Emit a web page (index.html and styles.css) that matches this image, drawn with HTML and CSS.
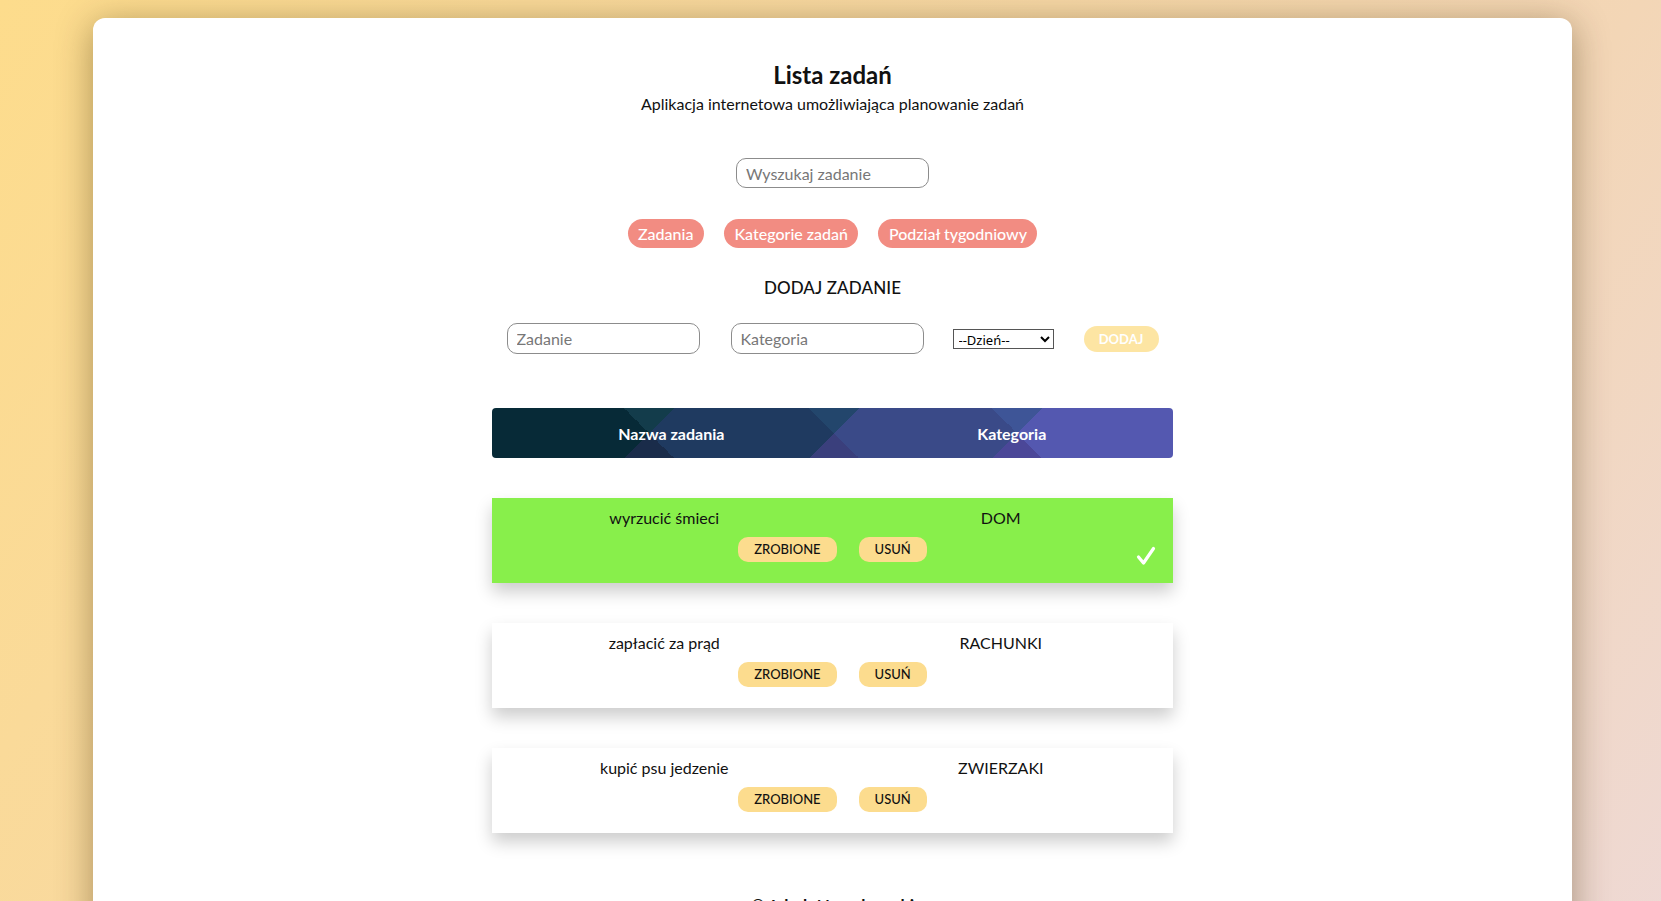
FILE: index.html
```html
<!DOCTYPE html>
<html lang="pl">
<head>
<meta charset="utf-8">
<title>Lista zadań</title>
<link rel="stylesheet" href="styles.css">
</head>
<body>
<main class="card">
  <header class="intro">
    <h1 class="title">Lista zadań</h1>
    <p class="subtitle">Aplikacja internetowa umożliwiająca planowanie zadań</p>
  </header>

  <div class="search-wrap">
    <input class="field search" type="text" placeholder="Wyszukaj zadanie">
  </div>

  <nav class="nav">
    <button class="pill">Zadania</button>
    <button class="pill">Kategorie zadań</button>
    <button class="pill">Podział tygodniowy</button>
  </nav>

  <h2 class="section-title">DODAJ ZADANIE</h2>

  <form class="add-form">
    <input class="field" type="text" placeholder="Zadanie">
    <input class="field" type="text" placeholder="Kategoria">
    <select class="day">
      <option>--Dzień--</option>
    </select>
    <button class="add-btn" type="button">DODAJ</button>
  </form>

  <section class="list">
    <div class="list-head">
      <div class="head-cell">Nazwa zadania</div>
      <div class="head-cell">Kategoria</div>
    </div>

    <div class="task done">
      <div class="task-cols">
        <div class="task-cell">wyrzucić śmieci</div>
        <div class="task-cell">DOM</div>
      </div>
      <div class="task-actions">
        <button class="small-btn">ZROBIONE</button>
        <button class="small-btn">USUŃ</button>
      </div>
      <svg class="check" width="20" height="20" viewBox="0 0 20 20" aria-hidden="true">
        <polyline points="2.5,11 7.5,17 17.5,2.5" fill="none" stroke="#fff" stroke-width="3.2" stroke-linecap="round" stroke-linejoin="round"/>
      </svg>
    </div>

    <div class="task">
      <div class="task-cols">
        <div class="task-cell">zapłacić za prąd</div>
        <div class="task-cell">RACHUNKI</div>
      </div>
      <div class="task-actions">
        <button class="small-btn">ZROBIONE</button>
        <button class="small-btn">USUŃ</button>
      </div>
    </div>

    <div class="task">
      <div class="task-cols">
        <div class="task-cell">kupić psu jedzenie</div>
        <div class="task-cell">ZWIERZAKI</div>
      </div>
      <div class="task-actions">
        <button class="small-btn">ZROBIONE</button>
        <button class="small-btn">USUŃ</button>
      </div>
    </div>
  </section>

  <footer class="footer">© Jakub Nowakowski</footer>
</main>
</body>
</html>
```

FILE: styles.css
```css
html {
  min-height: 100%;
  background: linear-gradient(125deg, #fddc8c 0%, #f7d8a6 45%, #f3d6b6 70%, #eed9d6 100%);
}

body {
  margin: 0;
  padding: 18px 89px 0 93px;
  font-family: Lato, "Noto Sans", sans-serif;
  color: #111;
}

.card {
  background: #fff;
  border-radius: 12px;
  box-shadow: 0 6px 36px rgba(60, 40, 0, 0.42);
  padding: 42px 0 20px;
  min-height: 900px;
  display: flex;
  flex-direction: column;
  align-items: center;
}

.intro {
  text-align: center;
}

.title {
  margin: 0;
  font-size: 24px;
  line-height: 30px;
  font-weight: 700;
  color: #111;
}

.subtitle {
  margin: 5px 0 0;
  font-size: 16px;
  line-height: 18px;
  color: #111;
}

.search-wrap {
  margin-top: 45px;
}

.field {
  box-sizing: border-box;
  width: 193px;
  height: 31px;
  border: 1px solid #8c8c8c;
  border-radius: 10px;
  padding: 0 9px;
  font-family: Lato, "Noto Sans", sans-serif;
  font-size: 16px;
  color: #222;
  background: #fff;
  outline: none;
}

.field::placeholder {
  color: #777;
}

.search {
  height: 30px;
}

.nav {
  margin-top: 31px;
  display: flex;
  gap: 20px;
}

.pill {
  height: 29px;
  padding: 0 10.5px;
  border: none;
  border-radius: 15px;
  background: #f28c82;
  color: #fff;
  font-family: Lato, "Noto Sans", sans-serif;
  font-size: 16px;
  font-weight: 500;
  line-height: 29px;
}

.section-title {
  margin: 29px 0 0;
  font-size: 17px;
  line-height: 22px;
  font-weight: 500;
  color: #111;
  letter-spacing: 0.1px;
}

.add-form {
  margin-top: 24px;
  display: flex;
  align-items: center;
  gap: 30px;
}

.add-form .field + .field {
  margin-left: 1px;
}

.day {
  box-sizing: border-box;
  width: 101px;
  height: 20px;
  border: 1px solid #555;
  border-radius: 0;
  background: #fff;
  font-family: "Noto Sans", "Open Sans", sans-serif;
  font-size: 13px;
  color: #000;
  padding: 0 0 0 1px;
  margin-left: -1px;
}

.add-btn {
  width: 75px;
  height: 26px;
  border: none;
  border-radius: 13px;
  background: #fde5a3;
  color: #fff;
  font-family: Lato, "Noto Sans", sans-serif;
  font-size: 13px;
  font-weight: 700;
}

.list {
  margin-top: 54px;
  width: 681px;
  display: flex;
  flex-direction: column;
  gap: 40px;
}

.list-head {
  height: 50px;
  border-radius: 4px;
  display: grid;
  grid-template-columns: 1fr 1fr;
  align-items: center;
  color: #fff;
  font-size: 16px;
  font-weight: 700;
  background:
    conic-gradient(from -45deg at 50% 50%, #133c4b 0deg 90deg, #1f3a60 90deg 180deg, #1a2c4a 180deg 270deg, #072a37 270deg 360deg) 132px 0 / 50px 100% no-repeat,
    conic-gradient(from -45deg at 50% 50%, #23466c 0deg 90deg, #3a4a88 90deg 180deg, #3a3f7c 180deg 270deg, #1f3a60 270deg 360deg) 317px 0 / 50px 100% no-repeat,
    conic-gradient(from -45deg at 50% 50%, #3e5597 0deg 90deg, #5458b0 90deg 180deg, #4b4798 180deg 270deg, #3a4a88 270deg 360deg) 500px 0 / 50px 100% no-repeat,
    linear-gradient(90deg, #072a37 0 132px, #1f3a60 182px 317px, #3a4a88 367px 500px, #5458b0 550px 100%);
}

.head-cell {
  padding-left: 18px;
  text-align: center;
}

.task {
  position: relative;
  background: #fff;
  height: 85px;
  box-sizing: border-box;
  padding: 10px 4px 0;
  box-shadow: 0 9px 16px rgba(0, 0, 0, 0.2);
}

.task.done {
  background: #88ef4b;
}

.task-cols {
  display: grid;
  grid-template-columns: 1fr 1fr;
  font-size: 16px;
  line-height: 20px;
  color: #111;
}

.task-cell {
  text-align: center;
}

.task-actions {
  margin-top: 9px;
  display: flex;
  justify-content: center;
  gap: 22px;
}

.small-btn {
  height: 25px;
  padding: 0 16px;
  border: none;
  border-radius: 10px;
  background: #fcdc8e;
  color: #111;
  font-family: Lato, "Noto Sans", sans-serif;
  font-size: 13px;
  font-weight: 500;
  line-height: 25px;
}

.check {
  position: absolute;
  right: 17px;
  top: 48px;
}

.footer {
  margin-top: 63px;
  font-size: 17px;
  font-weight: 700;
  line-height: 20px;
  color: #111;
}
```
